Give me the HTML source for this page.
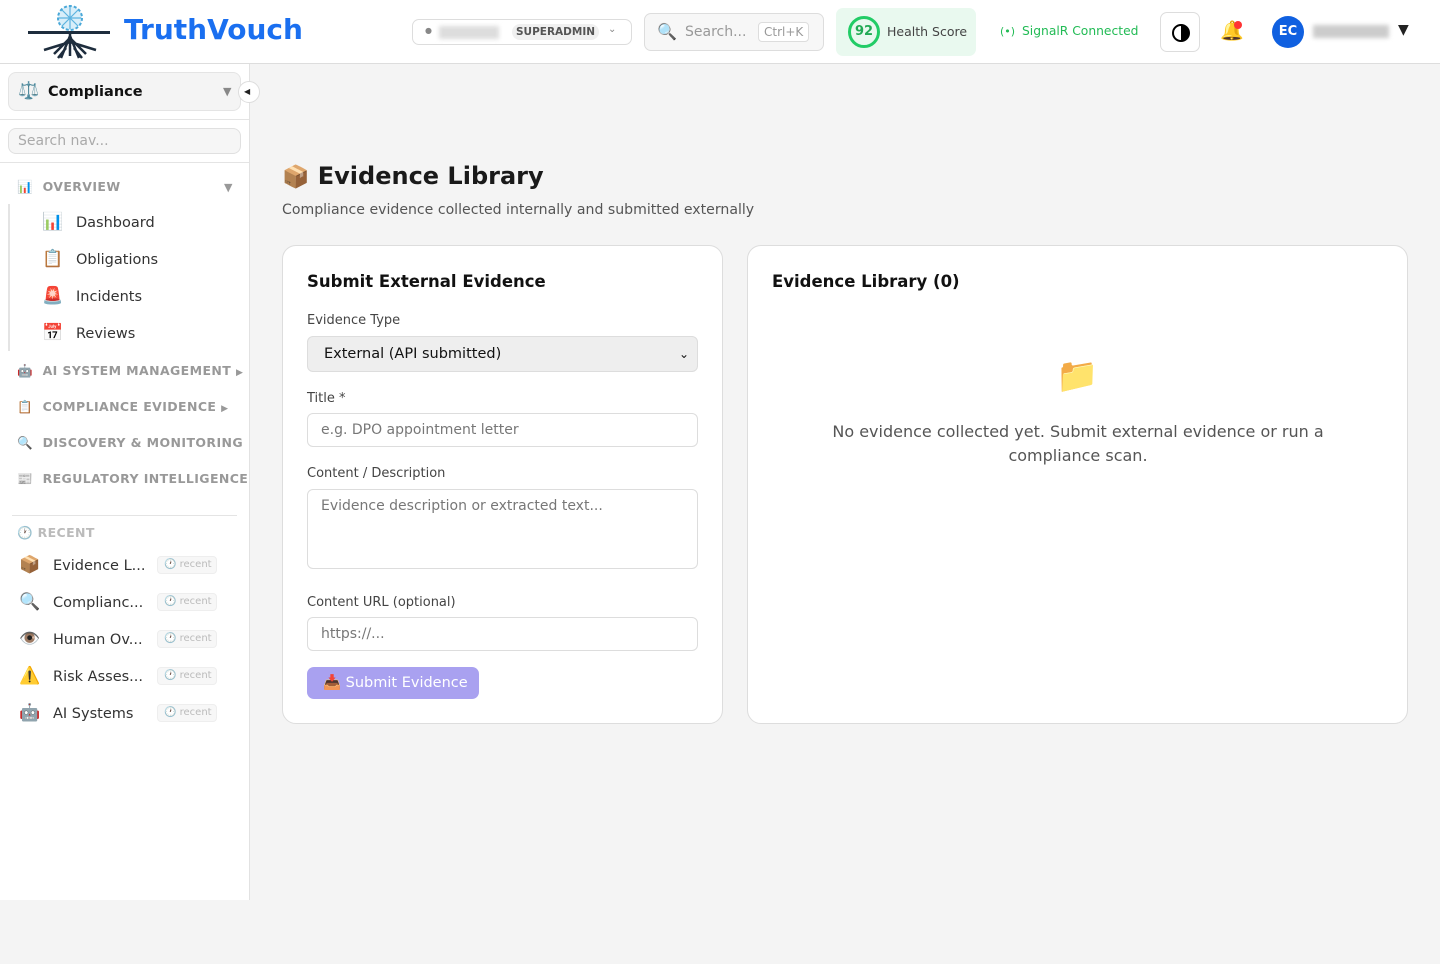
<!DOCTYPE html>
<html><head><meta charset="utf-8"><style>
*{box-sizing:border-box;margin:0;padding:0}
body{width:1440px;height:964px;background:#f4f4f4;font-family:"DejaVu Sans","Liberation Sans",sans-serif;position:relative;overflow:hidden;color:#222}
.hdr{position:absolute;left:0;top:0;width:1440px;height:64px;background:#fff;border-bottom:1px solid #ddd}
.abs{position:absolute}
.side{position:absolute;left:0;top:64px;width:250px;height:836px;background:#fff;border-right:1px solid #e2e2e2}
.sec{position:absolute;left:17px;font-size:12.5px;font-weight:bold;letter-spacing:0.4px;color:#999;white-space:nowrap}
.sec i{font-style:normal;margin-right:10px;letter-spacing:0}
.item{position:absolute;left:42px;font-size:14.5px;color:#333}
.item i{font-style:normal;display:inline-block;width:34px;font-size:17px}
.rec{position:absolute;left:19px;font-size:14.5px;color:#333;white-space:nowrap}
.rec i{font-style:normal;display:inline-block;width:34px;font-size:17px}
.badge{position:absolute;left:157px;width:60px;height:18px;border:1px solid #eee;background:#f7f7f7;border-radius:4px;font-size:10px;color:#bbb;line-height:16px;padding-left:6px}
.card{position:absolute;background:#fff;border:1px solid #ddd;border-radius:14px}
.lbl{position:absolute;left:24px;font-size:13px;color:#444}
.inp{position:absolute;left:24px;width:391px;border:1px solid #ddd;border-radius:6px;font-size:14px;color:#777;padding-left:13px;background:#fff}
</style></head><body>
<div class="hdr">
 <svg class="abs" style="left:26px;top:4px" width="86" height="56" viewBox="0 0 86 56">
  <circle cx="44" cy="14" r="12" fill="#d8eef9" stroke="#4aa8d8" stroke-width="2" stroke-dasharray="3 2"/>
  <path d="M33 14h22M44 3v22M36 6l16 16M52 6L36 22" stroke="#5cb3e0" stroke-width="1.2"/>
  <rect x="2" y="27" width="82" height="3" fill="#1e2d3d"/>
  <path d="M44 30v22M44 34l-16 16M44 34l16 16M44 38l-26 8M44 38l26 8M44 32l-9 22M44 32l9 22M40 44l-8 10M48 44l8 10" stroke="#1e2d3d" stroke-width="2.5" fill="none"/>
 </svg>
 <div class="abs" style="left:124px;top:13px;font-size:28px;font-weight:bold;color:#1a6ff0;font-family:'DejaVu Sans'">TruthVouch</div>
 <div class="abs" style="left:412px;top:19px;width:220px;height:26px;border:1px solid #ddd;border-radius:7px">
  <span class="abs" style="left:12px;top:6px;font-size:8px;color:#888">●</span>
  <span class="abs" style="left:26px;top:6px;width:60px;height:13px;background:#ddd;filter:blur(2px)"></span>
  <span class="abs" style="left:99px;top:4px;height:16px;background:#f0f0f0;border-radius:8px;padding:0 4px;font-size:10.5px;font-weight:bold;color:#555;line-height:16px">SUPERADMIN</span>
  <span class="abs" style="left:195px;top:4px;font-size:10px;color:#888">⌄</span>
 </div>
 <div class="abs" style="left:644px;top:13px;width:180px;height:38px;border:1px solid #ddd;border-radius:7px;background:#f7f7f7">
  <span class="abs" style="left:12px;top:8px;font-size:16px">🔍</span>
  <span class="abs" style="left:40px;top:10px;font-size:14px;color:#999">Search...</span>
  <span class="abs" style="left:113px;top:8px;height:20px;border:1px solid #ddd;border-radius:4px;background:#fff;font-size:12px;color:#999;padding:0 5px;line-height:18px">Ctrl+K</span>
 </div>
 <div class="abs" style="left:836px;top:8px;width:140px;height:48px;background:#e9f9ef;border-radius:7px">
  <div class="abs" style="left:12px;top:8px;width:32px;height:32px;border:3px solid #22cc66;border-radius:50%;text-align:center;line-height:26px;font-size:13px;font-weight:bold;color:#22aa55">92</div>
  <span class="abs" style="left:51px;top:16px;font-size:12.5px;color:#444">Health Score</span>
 </div>
 <span class="abs" style="left:1000px;top:25px;font-size:11px;color:#22bb55">(•)</span>
 <span class="abs" style="left:1022px;top:24px;font-size:12.3px;color:#22bb55">SignalR Connected</span>
 <div class="abs" style="left:1160px;top:12px;width:40px;height:40px;border:1px solid #ddd;border-radius:7px">
  <div class="abs" style="left:11px;top:11px;width:18px;height:18px;border:2px solid #000;border-radius:50%;background:linear-gradient(90deg,#fff 50%,#000 50%)"></div>
 </div>
 <span class="abs" style="left:1220px;top:19px;font-size:19px">🔔</span>
 <span class="abs" style="left:1234px;top:21px;width:8px;height:8px;border-radius:50%;background:#f33"></span>
 <div class="abs" style="left:1272px;top:16px;width:32px;height:32px;border-radius:50%;background:#1060e0;color:#fff;font-size:13px;font-weight:bold;text-align:center;line-height:32px">EC</div>
 <span class="abs" style="left:1313px;top:25px;width:76px;height:13px;background:#ccc;filter:blur(2px)"></span>
 <span class="abs" style="left:1398px;top:22px;font-size:14px">▼</span>
</div>

<div class="side">
 <div class="abs" style="left:8px;top:8px;width:233px;height:39px;background:#f4f4f4;border:1px solid #e4e4e4;border-radius:8px">
  <span class="abs" style="left:9px;top:8px;font-size:17px">⚖️</span>
  <span class="abs" style="left:39px;top:11px;font-size:14.5px;font-weight:bold;color:#111">Compliance</span>
  <span class="abs" style="left:214px;top:12px;font-size:11px;color:#888">▼</span>
 </div>
 <div class="abs" style="left:238px;top:17px;width:22px;height:22px;border:1px solid #ddd;border-radius:50%;background:#fff;font-size:8px;line-height:20px;padding-left:5px">◀</div>
 <div class="abs" style="left:0;top:55px;width:249px;border-top:1px solid #e4e4e4"></div>
 <div class="abs" style="left:8px;top:64px;width:233px;height:26px;background:#f6f6f6;border:1px solid #e0e0e0;border-radius:8px;font-size:14px;color:#aaa;padding:4px 9px">Search nav...</div>
 <div class="abs" style="left:0;top:98px;width:249px;border-top:1px solid #e4e4e4"></div>
 <div class="sec" style="top:115px"><i>📊</i>OVERVIEW</div>
 <span class="abs" style="left:224px;top:117px;font-size:11px;color:#999">▼</span>
 <div class="abs" style="left:8px;top:140px;height:147px;border-left:2px solid #e4e4e4"></div>
 <div class="item" style="top:148px"><i>📊</i>Dashboard</div>
 <div class="item" style="top:185px"><i>📋</i>Obligations</div>
 <div class="item" style="top:222px"><i>🚨</i>Incidents</div>
 <div class="item" style="top:259px"><i>📅</i>Reviews</div>
 <div class="sec" style="top:299px"><i>🤖</i>AI SYSTEM MANAGEMENT <span style="font-size:9px">▶</span></div>
 <div class="sec" style="top:335px"><i>📋</i>COMPLIANCE EVIDENCE <span style="font-size:9px">▶</span></div>
 <div class="sec" style="top:371px"><i>🔍</i>DISCOVERY &amp; MONITORING</div>
 <div class="sec" style="top:407px"><i>📰</i>REGULATORY INTELLIGENCE</div>
 <div class="abs" style="left:12px;top:451px;width:225px;border-top:1px solid #e4e4e4"></div>
 <div class="sec" style="top:461px;color:#bbb"><i style="margin-right:5px">🕐</i>RECENT</div>
 <div class="rec" style="top:491px"><i>📦</i>Evidence L...</div><div class="badge" style="top:492px">🕐 recent</div>
 <div class="rec" style="top:528px"><i>🔍</i>Complianc...</div><div class="badge" style="top:529px">🕐 recent</div>
 <div class="rec" style="top:565px"><i>👁️</i>Human Ov...</div><div class="badge" style="top:566px">🕐 recent</div>
 <div class="rec" style="top:602px"><i>⚠️</i>Risk Asses...</div><div class="badge" style="top:603px">🕐 recent</div>
 <div class="rec" style="top:639px"><i>🤖</i>AI Systems</div><div class="badge" style="top:640px">🕐 recent</div>
</div>

<div class="abs" style="left:282px;top:162px;font-size:24px;font-weight:bold;color:#1a1a1a"><span style="font-size:22px">📦</span> Evidence Library</div>
<div class="abs" style="left:282px;top:202px;font-size:14.1px;color:#555">Compliance evidence collected internally and submitted externally</div>

<div class="card" style="left:282px;top:245px;width:441px;height:479px">
 <div class="abs" style="left:24px;top:26px;font-size:16.5px;font-weight:bold;color:#111">Submit External Evidence</div>
 <div class="lbl" style="top:67px">Evidence Type</div>
 <div class="inp" style="top:90px;height:36px;background:#eee;color:#111;line-height:34px;padding-left:16px;font-size:14.5px">External (API submitted)<span class="abs" style="right:8px;top:0;font-size:12px">⌄</span></div>
 <div class="lbl" style="top:145px">Title *</div>
 <div class="inp" style="top:167px;height:34px;line-height:32px">e.g. DPO appointment letter</div>
 <div class="lbl" style="top:220px">Content / Description</div>
 <div class="inp" style="top:243px;height:80px;padding-top:8px">Evidence description or extracted text...</div>
 <div class="lbl" style="top:349px">Content URL (optional)</div>
 <div class="inp" style="top:371px;height:34px;line-height:32px">https://...</div>
 <div class="abs" style="left:24px;top:421px;width:172px;height:32px;background:#a9a1f0;border-radius:7px;color:#fff;font-size:14.5px;line-height:32px;padding-left:16px">📥 Submit Evidence</div>
</div>

<div class="card" style="left:747px;top:245px;width:661px;height:479px">
 <div class="abs" style="left:24px;top:26px;font-size:16.5px;font-weight:bold;color:#111">Evidence Library (0)</div>
 <div class="abs" style="left:0;width:100%;top:110px;text-align:center;font-size:34px">📁</div>
 <div class="abs" style="left:60px;width:540px;top:174px;text-align:center;font-size:16px;color:#555;line-height:24px">No evidence collected yet. Submit external evidence or run a compliance scan.</div>
</div>
</body></html>
